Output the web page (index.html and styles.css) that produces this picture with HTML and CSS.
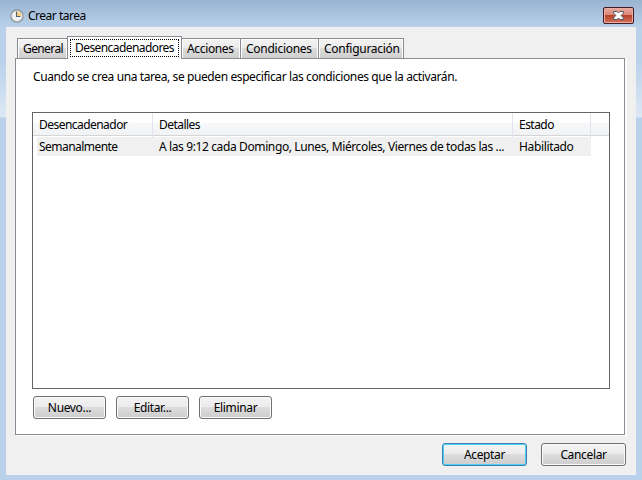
FILE: index.html
```
<!DOCTYPE html>
<html lang="es">
<head>
<meta charset="utf-8">
<title>Crear tarea</title>
<link rel="stylesheet" href="styles.css">
</head>
<body>
<div class="window">
  <header class="titlebar">
    <svg class="clock" width="14" height="14" viewBox="0 0 14 14">
      <circle cx="7" cy="7" r="6.1" fill="#eef4f8" stroke="#858789" stroke-width="1.1"/>
      <circle cx="7" cy="7" r="5" fill="none" stroke="#d4d5d2" stroke-width=".8"/>
      <path d="M7 7V2.4A4.6 4.6 0 0 1 11.6 7Z" fill="#f5cf82"/>
      <path d="M6.5 2.5V7.5H10.5" fill="none" stroke="#56616c" stroke-width="1.1"/>
    </svg>
    <h1 class="title">Crear tarea</h1>
    <button class="close" aria-label="Cerrar">
      <svg width="13" height="11" viewBox="0 0 13 11">
        <path d="M1.5 1.5H5L6.5 3 8 1.5H11.5V3L9.2 5.5 11.5 8V9.5H8L6.5 8 5 9.5H1.5V8L3.8 5.5 1.5 3Z" fill="#fff" stroke="#535666"/>
      </svg>
    </button>
  </header>
  <main class="client">
    <nav class="tabs">
      <div class="tab general"><span>General</span></div>
      <div class="tab active"><span class="focus">Desencadenadores</span></div>
      <div class="tab acciones"><span>Acciones</span></div>
      <div class="tab condiciones"><span>Condiciones</span></div>
      <div class="tab configuracion"><span>Configuración</span></div>
    </nav>
    <section class="panel">
      <p class="intro">Cuando se crea una tarea, se pueden especificar las condiciones que la activarán.</p>
      <div class="list">
        <div class="row head"><div>Desencadenador</div><div>Detalles</div><div>Estado</div><div class="rest"></div></div>
        <div class="row item"><div>Semanalmente</div><div class="detail">A las 9:12 cada Domingo, Lunes, Miércoles, Viernes de todas las ...</div><div class="state">Habilitado</div></div>
      </div>
      <div class="actions">
        <button class="btn">Nuevo...</button>
        <button class="btn">Editar...</button>
        <button class="btn">Eliminar</button>
      </div>
    </section>
    <footer class="footer">
      <button class="btn default">Aceptar</button>
      <button class="btn">Cancelar</button>
    </footer>
  </main>
</div>
</body>
</html>
```
FILE: styles.css
```
* { box-sizing: border-box; }
body {
  margin: 0;
  font: 12px/16px "Noto Sans", "Open Sans", sans-serif;
  letter-spacing: -0.35px;
  color: #000;
}
.window {
  width: 642px;
  height: 480px;
  padding: 0 6px 5px;
  background: linear-gradient(#99b4d1, #b9d1ea 27px, #b9d1ea 60px, #dce8f5 117px, #b9d1ea 118px);
}
.titlebar {
  display: flex;
  height: 27px;
  padding: 7px 2px 0 4px;
}
.clock { margin-top: 2px; }
.title {
  flex: 1;
  margin: 1px 0 0 4px;
  font-size: 12px;
  font-weight: 400;
  line-height: 16px;
  letter-spacing: -0.5px;
}
.close {
  display: flex;
  align-items: center;
  justify-content: center;
  width: 31px;
  height: 17px;
  padding: 0;
  border: 1px solid #431b26;
  border-radius: 2px;
  background: linear-gradient(#e9a99d, #d98578 48%, #b8432d 50%, #d4715b);
  box-shadow: inset 0 0 0 1px #e8aca0;
}
.client {
  height: 448px;
  padding: 9px 9px 0;
  background: #f0f0f0;
}
.tabs {
  display: flex;
  align-items: flex-end;
  height: 22px;
  padding-left: 2px;
}
.tab {
  height: 20px;
  padding: 2px 0 0 5px;
  white-space: nowrap;
  border: 1px solid #898c95;
  border-bottom: 0;
  border-right-width: 0;
  background: linear-gradient(#f3f3f3, #ebebeb 48%, #dddddd 50%, #cfcfcf);
  box-shadow: inset 1px 1px #fcfcfc, inset -1px 0 #fcfcfc;
}
.general { width: 50px; letter-spacing: -0.6px; }
.active {
  z-index: 1;
  width: 115px;
  height: 23px;
  margin-bottom: -1px;
  padding: 2px 2px 0;
  border-right-width: 1px;
  background: #fff;
}
.focus {
  display: block;
  height: 18px;
  padding-left: 4px;
  line-height: 15px;
  letter-spacing: -0.57px;
  border: 1px dotted #000;
}
.acciones { width: 58px; border-left: 0; }
.condiciones { width: 78px; letter-spacing: -0.27px; }
.configuracion { width: 86px; border-right-width: 1px; letter-spacing: -0.27px; }
.panel {
  width: 610px;
  height: 377px;
  padding: 10px 14px 0 16px;
  border: 1px solid #898c95;
  background: #fff;
  box-shadow: 2px 1px #fff;
}
.intro {
  margin: 0 0 27px 1px;
  white-space: nowrap;
  letter-spacing: -0.4px;
}
.list {
  width: 578px;
  height: 277px;
  border: 1px solid #646568;
  background: #fff;
}
.row {
  display: grid;
  grid-template-columns: 120px 360px 78px 1fr;
  white-space: nowrap;
  letter-spacing: -0.54px;
}
.row > div { padding-left: 6px; }
.head {
  height: 23px;
  line-height: 24px;
  border-bottom: 1px solid #d5d5d5;
  background: linear-gradient(#fff 45%, #f7f8fa 46%, #f1f2f4);
}
.head > div { border-right: 1px solid #e2e3ea; }
.head > .rest { border: 0; }
.item {
  grid-template-columns: 116px 360px 1fr;
  width: 554px;
  height: 19px;
  margin: 1px 0 0 4px;
  line-height: 19px;
  background: #f0f0f0;
}
.item > div:first-child { padding-left: 2px; }
.item > .detail { letter-spacing: -0.38px; }
.item > .state { letter-spacing: -0.35px; }
.actions {
  display: flex;
  gap: 10px;
  margin: 7px 0 0 1px;
}
.btn {
  width: 73px;
  height: 23px;
  padding: 0;
  font: inherit;
  letter-spacing: inherit;
  color: #000;
  border: 1px solid #707070;
  border-radius: 3px;
  background: linear-gradient(#f3f3f3, #ebebeb 49%, #dddddd 50%, #cdcdcd);
  box-shadow: inset 0 0 0 1px #fafafa;
}
.footer {
  display: flex;
  justify-content: flex-end;
  gap: 14px;
  margin: 8px 1px 0 0;
}
.footer .btn { width: 85px; }
.btn.default {
  border-color: #3c7fb1;
  box-shadow: inset 0 0 0 1px #48d1f6;
}
```
